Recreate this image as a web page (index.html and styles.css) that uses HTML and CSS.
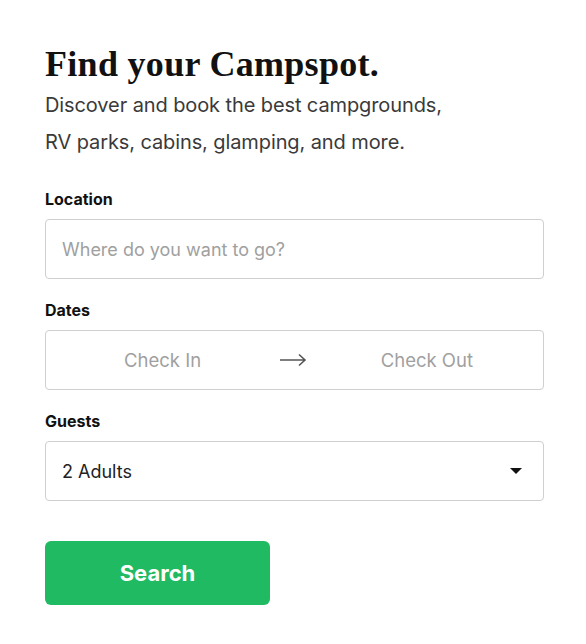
FILE: index.html
```html
<!DOCTYPE html>
<html lang="en">
<head>
<meta charset="utf-8">
<title>Find your Campspot</title>
<link rel="stylesheet" href="styles.css">
</head>
<body>
<main class="card">
  <h1 class="title">Find your Campspot.</h1>
  <p class="lead">Discover and book the best campgrounds,<br>RV parks, cabins, glamping, and more.</p>
  <form class="form">
    <div class="field">
      <label class="label">Location</label>
      <div class="box"><span class="placeholder">Where do you want to go?</span></div>
    </div>
    <div class="field">
      <label class="label">Dates</label>
      <div class="box dates">
        <span class="placeholder date">Check In</span>
        <svg class="arrow" width="28" height="14" viewBox="0 0 28 14"><path d="M1 7H26M20 1.5L26 7L20 12.5" fill="none" stroke="#555" stroke-width="1.6"/></svg>
        <span class="placeholder date">Check Out</span>
      </div>
    </div>
    <div class="field">
      <label class="label">Guests</label>
      <div class="box select"><span class="value">2 Adults</span><span class="caret"></span></div>
    </div>
    <button type="button" class="btn">Search</button>
  </form>
</main>
</body>
</html>
```
FILE: styles.css
```css
* { box-sizing: border-box; }
html, body { margin: 0; background: #fff; }
body { font-family: Inter, "Noto Sans", sans-serif; color: #222; }
.card { padding: 44px 42px 0 45px; }
.title {
  font-family: "Liberation Serif", serif;
  font-weight: 700;
  font-size: 36px;
  line-height: 40px;
  margin: 0;
  color: #111;
  letter-spacing: 0.3px;
}
.lead {
  margin: 3px 0 0;
  font-size: 20px;
  line-height: 37px;
  color: #3a3a3a;
  letter-spacing: -0.1px;
}
.form { margin-top: 29px; display: flex; flex-direction: column; }
.field { display: flex; flex-direction: column; margin-bottom: 22px; }
.label { font-size: 16px; font-weight: 700; color: #111; line-height: 19px; margin-bottom: 10px; }
.box {
  height: 60px;
  border: 1.5px solid #cfcfcf;
  border-radius: 4px;
  display: flex;
  align-items: center;
  padding: 0 16px;
  font-size: 18px;
}
.placeholder { color: #a0a0a0; }
.dates { justify-content: space-between; padding: 0 70px 0 78px; font-size: 18.5px; }
.arrow { display: block; margin-left: 4px; }
.select { justify-content: space-between; padding-right: 21px; }
.value { color: #222; }
.caret { width: 0; height: 0; border-left: 6px solid transparent; border-right: 6px solid transparent; border-top: 6px solid #111; }
.btn {
  margin-top: 18px;
  width: 225px;
  height: 64px;
  background: #1fba62;
  border: none;
  border-radius: 6px;
  color: #fff;
  font-family: Inter, "Noto Sans", sans-serif;
  font-weight: 700;
  font-size: 22px;
}
```
